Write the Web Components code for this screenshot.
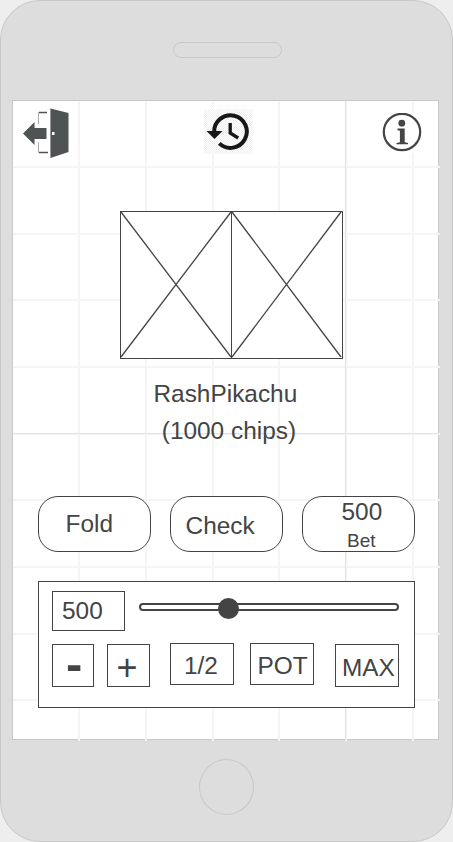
<!DOCTYPE html>
<html lang="en">
<head>
<meta charset="utf-8">
<title>Poker table</title>
<style>
html,body{margin:0;background:#eee}
body{font:24.4px/28px "Liberation Sans",Arial,sans-serif;color:#444}
</style>
</head>
<body>
<phone-frame>
  <table-screen>
    <tool-bar></tool-bar>
    <hand-cards></hand-cards>
    <player-info name="RashPikachu" stack="(1000 chips)"></player-info>
    <action-row>
      <box-button style="--w:113px;--h:56px;--r:20px;--px:26.5px;--py:13px">Fold</box-button>
      <box-button style="--w:113px;--h:56px;--r:20px;--px:14.6px;--py:15px">Check</box-button>
      <box-button style="--w:113px;--h:56px;--r:20px;--px:38.5px;--py:1px">500<small slot="sub">Bet</small></box-button>
    </action-row>
    <bet-panel></bet-panel>
  </table-screen>
</phone-frame>
<script>
const define = (name, html) => customElements.define(name, class extends HTMLElement {
  constructor() {
    super();
    this.attachShadow({mode: 'open'}).innerHTML = html(this);
  }
});

define('box-button', () => `
<style>
:host{display:block;box-sizing:border-box;flex:none;width:var(--w);height:var(--h);border:1px solid #444;border-radius:var(--r,0);padding:var(--py,0) 0 0 var(--px,0);white-space:nowrap;background:#fff}
::slotted(small){display:block;font-size:19px;line-height:30px;padding-left:5.5px}
</style><slot></slot><slot name="sub"></slot>`);

define('phone-frame', () => `
<style>
:host{display:flex;flex-direction:column;align-items:center;box-sizing:border-box;width:453px;height:842px;background:#ddd;border:1px solid #c8c8c8;border-radius:40px;padding-right:2px}
.speaker{box-sizing:border-box;width:109px;height:16px;border:1px solid #c8c8c8;border-radius:8px;margin:41px 0 42px 4px;flex:none}
.home{box-sizing:border-box;width:55px;height:56px;border:1px solid #c8c8c8;border-radius:50%;margin:19px 0 0 2px;flex:none}
</style>
<div class="speaker"></div><slot></slot><div class="home"></div>`);

const grid = () => {
  let s = '';
  for (let i = 0; i < 6; i++) {
    const x = Math.round(65.3 + i * 66.67);
    s += `<path d="M${x + 1} 0V640" stroke="#f5f5f5" stroke-width="2"/>`;
  }
  for (let i = 0; i < 9; i++) {
    const y = Math.round(64.9 + i * 66.67);
    s += `<path d="M0 ${y + 1}H427" stroke="#f5f5f5" stroke-width="2"/>`;
  }
  return s + '<path d="M332.5 0V639M0 332.5H426" stroke="#e2e2e2"/>';
};

define('table-screen', () => `
<style>
:host{display:flex;flex-direction:column;position:relative;box-sizing:border-box;flex:none;width:427px;height:640px;border:1px solid #c8c8c8;background:#fff}
.grid{position:absolute;inset:0;overflow:visible}
.content{position:relative;display:flex;flex-direction:column}
</style>
<svg class="grid" width="425" height="638" fill="none">${grid()}</svg>
<div class="content"><slot></slot></div>`);

define('tool-bar', () => `
<style>
:host{display:flex;justify-content:space-between;align-items:flex-start;padding:7px 16px 0 9px;height:103px}
svg{display:block}
.info{margin-top:5px}.history{margin:1px 0 0 6px}
</style>
<svg width="48" height="52">
 <rect width="48" height="52" fill="#fff"/>
 <path d="M1 25.500L12.500 14v6h12v11h-12V37z" fill="#505353"/>
 <path d="M16.500 16V4.500H25M16.500 34V44.500H26" fill="none" stroke="#aaa"/>
 <path d="M17 4.500h8M17 44.500h9" stroke="#505353" stroke-width="1.500"/>
 <path d="M28.500 0.500L46.500 5v39L28.500 50z" fill="#505353"/>
 <path d="M28.500 0.500V50" stroke="#999"/>
 <rect x="30" y="24" width="2.500" height="3" fill="#fff"/>
</svg>
<svg class="history" width="50" height="45">
 <defs><pattern id="p" width="2" height="2" patternUnits="userSpaceOnUse"><rect width="2" height="2" fill="#fff"/><path d="M0 0h1v1H0zM1 1h1v1H1z" fill="#f0f0f0"/></pattern></defs>
 <rect width="49" height="45" fill="url(#p)"/>
 <path d="M10.200 23A16.300 16.300 0 1 1 15.300 34.400" fill="none" stroke="#171717" stroke-width="4"/>
 <path d="M2.500 22H18.500L10.500 30z" fill="#171717"/>
 <path d="M26.200 14v10l8 5" fill="none" stroke="#171717" stroke-width="3.300"/>
</svg>
<svg class="info" width="40" height="40" viewBox="0 0 40 40">
 <rect width="40" height="40" fill="#fff"/>
 <circle cx="20" cy="19" r="18.200" fill="#fff" stroke="#444" stroke-width="2.200"/>
 <circle cx="19.800" cy="10.200" r="3.400" fill="#444"/>
 <path d="M15.500 15.500H22.700V29.300l3.300.8V31.300H14.500v-1.200l3.400-.8V17.800l-2.400-.5z" fill="#444"/>
</svg>`);

define('hand-cards', () => `
<style>:host{display:flex;padding-left:107px}svg{display:block}</style>
<svg width="223" height="148" fill="none" stroke="#444">
 <rect x=".5" y=".5" width="222" height="147" fill="#fff"/>
 <path d="M111.500 0V148"/>
 <path d="M1 1L111 146M111 1L1 146M112 1L221 146M221 1L112 146" stroke-width="1.300"/>
</svg>`);

define('player-info', el => `
<style>
:host{display:flex;flex-direction:column;gap:9px;padding:21px 0 50px 140.500px;height:66px}
.stack{padding-left:8.300px}
</style>
<div>${el.getAttribute('name')}</div><div class="stack">${el.getAttribute('stack')}</div>`);

define('action-row', () => `
<style>:host{display:flex;gap:19px;padding-left:25px}</style><slot></slot>`);

define('range-slider', () => `
<style>
:host{display:block;position:relative;box-sizing:border-box;width:260px;height:8px;border:2px solid #444;border-radius:4px;margin-top:12px;flex:none}
i{position:absolute;left:77px;top:-7px;width:21px;height:21px;border-radius:50%;background:#444}
</style><i></i>`);

define('bet-panel', () => `
<style>
:host{display:flex;flex-direction:column;gap:12px;box-sizing:border-box;width:377px;height:127px;border:1px solid #444;background:#fff;margin:29px 0 0 25px;padding:9px 0 0 13px}
.row{display:flex;align-items:flex-start}
.low{margin-top:1px}
.minus{font-size:49px;font-weight:bold}
.plus{font-size:36px}
</style>
<div class="row">
 <box-button style="--w:73px;--h:40px;--px:9px;--py:5px">500</box-button>
 <range-slider style="margin-left:14px"></range-slider>
</div>
<div class="row">
 <box-button class="low minus" style="--w:42px;--h:43px;--px:13px;--py:5px">-</box-button>
 <box-button class="low plus" style="--w:43px;--h:43px;--px:8.500px;--py:9px;margin-left:13px">+</box-button>
 <box-button style="--w:64px;--h:42px;--px:13px;--py:8px;margin-left:20px">1/2</box-button>
 <box-button style="--w:64px;--h:42px;--px:6.500px;--py:8px;margin-left:16px">POT</box-button>
 <box-button class="low" style="--w:64px;--h:43px;--px:6px;--py:9px;margin-left:21px">MAX</box-button>
</div>`);
</script>
</body>
</html>
